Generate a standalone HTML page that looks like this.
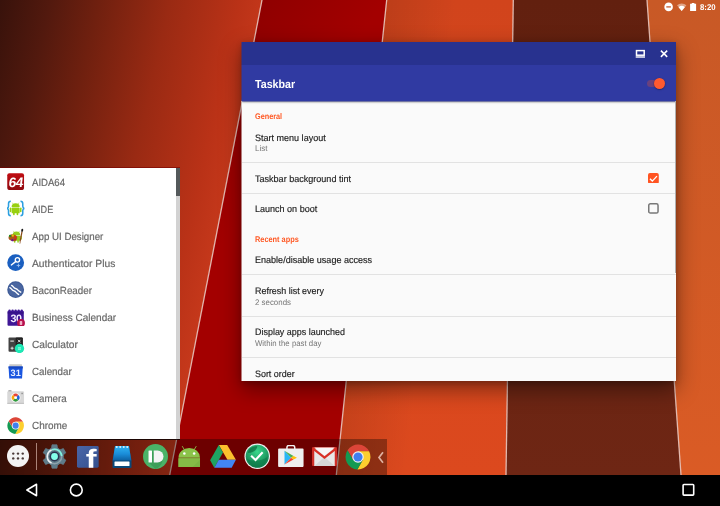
<!DOCTYPE html>
<html>
<head>
<meta charset="utf-8">
<title>Taskbar</title>
<style>
html,body{margin:0;padding:0;}
body{width:720px;height:506px;overflow:hidden;position:relative;background:#000;font-family:"Liberation Sans",sans-serif;text-rendering:geometricPrecision;}
#wall{position:absolute;left:0;top:0;width:720px;height:475px;}
#nav{position:absolute;left:0;top:475px;width:720px;height:31px;background:#000;}
#nav svg{position:absolute;left:0;top:0;}
#taskbar{position:absolute;left:0;top:438.700px;width:387.300px;height:36.300px;background:linear-gradient(90deg,rgba(0,0,0,0.300),rgba(0,0,0,0) 175px),rgba(0,0,0,0.33);}
#tbicons{position:absolute;left:0;top:0;width:720px;height:506px;pointer-events:none;}
#tbicons .div{position:absolute;left:35.800px;top:443px;width:1.200px;height:27px;background:rgba(255,225,215,0.550);}
#tbicons .arr{position:absolute;left:376px;top:449px;width:10px;height:16px;}
#menu{will-change:transform;position:absolute;left:0;top:168px;width:180px;height:270.700px;background:#fff;overflow:hidden;}
#menubot{position:absolute;left:0;top:438.400px;width:180px;height:1.300px;background:rgba(10,0,0,0.800);}
#winedge{position:absolute;left:241px;top:42px;width:1px;height:339px;opacity:0.500;background:linear-gradient(180deg,#28328f 0,#28328f 23px,#303aa2 23px,#303aa2 59.300px,#fafafa 59.300px);}
#menutop{position:absolute;left:0;top:167px;width:180px;height:1px;background:rgba(120,0,0,0.600);}
#menu .row{position:absolute;left:0;width:176px;height:27px;}
#menu .row span{position:absolute;left:31.700px;font-size:10.400px;line-height:13px;color:#686868;-webkit-text-stroke:0.200px #686868;white-space:nowrap;}
#menu .row svg{position:absolute;left:7.300px;top:4.200px;width:17.300px;height:17.300px;}
#menu .track{position:absolute;left:175.700px;top:0;width:4.300px;height:271px;background:#d2d2d2;}
#menu .thumb{position:absolute;left:175.700px;top:0;width:4.300px;height:27.500px;background:#54595b;}
#shadow{position:absolute;left:241.500px;top:42px;width:434.500px;height:339px;box-shadow:0 8px 20px 1px rgba(0,0,0,0.400),0 2px 6px rgba(0,0,0,0.220);}
#win{will-change:transform;position:absolute;left:242px;top:42px;width:434px;height:339.300px;background:#fafafa;overflow:hidden;}
#win .title{position:absolute;left:0;top:0;width:435px;height:23px;background:#28328f;z-index:2;}
#win .barx{position:absolute;left:0;top:59px;width:435px;height:1px;background:rgba(48,58,162,0.450);}
#win .title svg{position:absolute;left:0;top:0;}
#win .bar{position:absolute;left:0;top:23px;width:435px;height:36px;background:#303aa2;box-shadow:0 1.300px 2px rgba(0,0,0,0.500);}
#win .bar h1{position:absolute;left:13.200px;margin:0;font-size:11.600px;line-height:14px;font-weight:bold;color:#fff;white-space:nowrap;}
#win .bar .track{position:absolute;left:404.800px;top:14.900px;width:18px;height:7.600px;border-radius:4px;background:rgba(255,87,34,0.280);}
#win .bar .thumb{position:absolute;left:411.600px;top:12.600px;width:11.800px;height:11.800px;border-radius:6px;background:#ff5a30;box-shadow:0 0.500px 1.500px rgba(0,0,0,0.500);}
#win .hd{position:absolute;left:13.200px;font-size:8.200px;line-height:10px;font-weight:bold;color:#ff5722;white-space:nowrap;}
#win .t{position:absolute;left:13.200px;font-size:9.400px;line-height:11px;color:#202020;-webkit-text-stroke:0.150px #202020;white-space:nowrap;}
#win .s{position:absolute;left:13.200px;font-size:8.200px;line-height:10px;color:#757575;white-space:nowrap;}
#win .d{position:absolute;left:0;width:435px;height:1px;background:#e2e2e2;}
#win .sb{position:absolute;left:432.500px;top:59px;width:1.500px;height:172px;background:#b0b0b0;}
#win .cb1{position:absolute;left:406.100px;top:130.600px;width:10.800px;height:10.800px;}
#win .cb2{position:absolute;left:406.100px;top:160.900px;width:10.800px;height:10.800px;}
#status{will-change:transform;position:absolute;left:0;top:0;width:720px;height:14px;}
#status span{position:absolute;left:699.900px;color:#fff;font-size:8.400px;font-weight:bold;line-height:10px;white-space:nowrap;}
#status svg{position:absolute;left:0;top:0;}
</style>
</head>
<body>
<svg id="wall" width="720" height="475" viewBox="0 0 720 475">
<defs>
<linearGradient id="g1" gradientUnits="userSpaceOnUse" x1="0" y1="0" x2="286.2" y2="62.9"><stop offset="0" stop-color="#38120b"/><stop offset="0.167" stop-color="#52190e"/><stop offset="0.333" stop-color="#70200f"/><stop offset="0.567" stop-color="#9a2a13"/><stop offset="0.8" stop-color="#ba3217"/><stop offset="0.9" stop-color="#c5381b"/><stop offset="1" stop-color="#ca3a1b"/></linearGradient>
<linearGradient id="g2" gradientUnits="userSpaceOnUse" x1="255" y1="0" x2="345" y2="60"><stop offset="0" stop-color="#8e0000"/><stop offset="1" stop-color="#a30000"/></linearGradient>
<linearGradient id="g3" gradientUnits="userSpaceOnUse" x1="0" y1="0" x2="0" y2="475"><stop offset="0" stop-color="#d1441c"/><stop offset="1" stop-color="#dc491e"/></linearGradient>
<linearGradient id="g3b" gradientUnits="userSpaceOnUse" x1="386" y1="0" x2="456" y2="7.4"><stop offset="0" stop-color="#000" stop-opacity="0.1"/><stop offset="1" stop-color="#000" stop-opacity="0"/></linearGradient>
<linearGradient id="g4" gradientUnits="userSpaceOnUse" x1="0" y1="0" x2="0" y2="475"><stop offset="0" stop-color="#62200f"/><stop offset="1" stop-color="#6e2614"/></linearGradient>
<linearGradient id="g5" gradientUnits="userSpaceOnUse" x1="0" y1="0" x2="0" y2="475"><stop offset="0" stop-color="#c85926"/><stop offset="1" stop-color="#da5b25"/></linearGradient>
</defs>
<polygon points="0,0 262,0 169.7,475 0,475" fill="url(#g1)"/>
<polygon points="262,0 386.7,0 336.3,475 169.7,475" fill="url(#g2)"/>
<polygon points="386.7,0 513.3,0 506,475 336.3,475" fill="url(#g3)"/>
<polygon points="386.7,0 513.3,0 506,475 336.3,475" fill="url(#g3b)"/>
<polygon points="513.3,0 647,0 681,475 506,475" fill="url(#g4)"/>
<polygon points="647,0 720,0 720,475 681,475" fill="url(#g5)"/>
<g stroke="#ecc8c0" stroke-width="1.3" fill="none" opacity="0.9">
<line x1="262" y1="0" x2="169.7" y2="475"/>
<line x1="386.7" y1="0" x2="336.3" y2="475"/>
<line x1="513.3" y1="0" x2="506" y2="475"/>
<line x1="647" y1="0" x2="681" y2="475"/>
</g>
</svg>
<div id="status"><svg width="720" height="14" viewBox="0 0 720 14">
<circle cx="668.600" cy="6.900" r="4.300" fill="#fff"/><rect x="666.300" y="6.200" width="4.600" height="1.400" fill="#c86840"/>
<path d="M677,5.300 a6.800,6.800 0 0 1 9.400,0 l-4.700,5.800 z" fill="#fff" opacity="0.450"/>
<path d="M678.600,7.200 a4.500,4.500 0 0 1 6.200,0 l-3.100,3.900 z" fill="#fff"/>
<path d="M691.800,2.900 h2.600 v0.900 h1.700 v7.200 h-6 v-7.200 h1.700 z" fill="#fff"/>
</svg><span style="top:2.00px;transform:scale(0.9305,1.0);transform-origin:0 0px">8:20</span></div>
<div id="shadow"></div><div id="winedge"></div>
<div id="win">
<div class="title"><svg width="434" height="23" viewBox="0 0 434 23"><rect x="394.500" y="8.600" width="7.700" height="4.600" fill="none" stroke="#fff" stroke-width="1.500"/><rect x="393.700" y="14.300" width="9.300" height="1.400" fill="#fff"/><path d="M418.900,8.600 l6.300,6.300 M425.200,8.600 l-6.300,6.300" stroke="#fff" stroke-width="1.500"/></svg></div>
<div class="bar"><h1 style="top:13.00px;transform:scale(0.9218,1.0);transform-origin:0 0px">Taskbar</h1><div class="track"></div><div class="thumb"></div></div>
<div class="barx"></div>
<div class="hd" style="top:69.50px;transform:scale(0.8885,1.0);transform-origin:0 0px">General</div>
<div class="t" style="top:90.00px;transform:translateY(-0.4px) scale(0.9621,1.0);transform-origin:0 0px">Start menu layout</div>
<div class="s" style="top:101.50px;transform:translateY(0.4px) scale(0.9804,1.0);transform-origin:0 0px">List</div>
<div class="d" style="top:119.600px"></div>
<div class="t" style="top:131.00px;transform:translateY(-0.3px) scale(0.9644,1.0);transform-origin:0 0px">Taskbar background tint</div>
<div class="d" style="top:150.700px"></div>
<div class="t" style="top:161.00px;transform:translateY(0.2px) scale(0.9620,1.0);transform-origin:0 0px">Launch on boot</div>
<div class="hd" style="top:192.50px;transform:scale(0.8996,1.0);transform-origin:0 0px">Recent apps</div>
<div class="t" style="top:212.00px;transform:translateY(0.3px) scale(0.9643,1.0);transform-origin:0 0px">Enable/disable usage access</div>
<div class="d" style="top:232.400px"></div>
<div class="t" style="top:243.00px;transform:translateY(-0.3px) scale(0.9514,1.0);transform-origin:0 0px">Refresh list every</div>
<div class="s" style="top:255.50px;transform:translateY(-0.1px) scale(0.9644,1.0);transform-origin:0 0px">2 seconds</div>
<div class="d" style="top:273.600px"></div>
<div class="t" style="top:284.00px;transform:translateY(0.1px) scale(0.9540,1.0);transform-origin:0 0px">Display apps launched</div>
<div class="s" style="top:296.50px;transform:translateY(-0.2px) scale(0.9535,1.0);transform-origin:0 0px">Within the past day</div>
<div class="d" style="top:315.300px"></div>
<div class="t" style="top:326.00px;transform:translateY(-0.3px) scale(0.9499,1.0);transform-origin:0 0px">Sort order</div>
<div class="sb"></div>
<svg class="cb1" viewBox="0 0 20 20"><rect x="0" y="0" width="20" height="20" rx="3.500" fill="#ff5422"/><path d="M3.600,10.600 l4.400,4.400 l8.600,-9.200" fill="none" stroke="#fff" stroke-width="2.500"/></svg>
<svg class="cb2" viewBox="0 0 20 20"><rect x="1.400" y="1.400" width="17.200" height="17.200" rx="3" fill="none" stroke="#787878" stroke-width="2.800"/></svg>
</div>
<div id="menutop"></div><div id="menubot"></div>
<div id="menu">
<div class="track"></div><div class="thumb"></div>
<div class="row" style="top:0.5px"><svg style="top:4.20px" viewBox="0 0 34 34"><defs><linearGradient id="ai" x1="0" y1="0" x2="0" y2="1"><stop offset="0" stop-color="#c00c12"/><stop offset="1" stop-color="#900a10"/></linearGradient></defs>
<rect x="0.5" y="0.5" width="33" height="33" rx="4" fill="url(#ai)"/>
<text x="19.500" y="27.300" font-family="Liberation Sans,sans-serif" font-weight="bold" font-size="27" text-anchor="middle" fill="#fff" letter-spacing="-1.2" transform="skewX(-7)">64</text></svg><span style="top:8.50px;transform:scale(0.9215,1.0);transform-origin:0 0px">AIDA64</span></div>
<div class="row" style="top:28.0px"><svg style="top:4.25px" viewBox="0 0 34 34">
<g transform="translate(17,17.2) scale(1.13)" fill="#98d010">
<path d="M-7,-3 a7,6.5 0 0 1 14,0 z"/>
<rect x="-7" y="-2" width="14" height="10" rx="1.5"/>
<rect x="-10.2" y="-2" width="2.6" height="8" rx="1.3"/>
<rect x="7.6" y="-2" width="2.6" height="8" rx="1.3"/>
<rect x="-4.5" y="6" width="2.8" height="5.5" rx="1.3"/>
<rect x="1.7" y="6" width="2.8" height="5.5" rx="1.3"/>
<path d="M-4.2,-8 l-1.6,-2.6 M4.2,-8 l1.6,-2.6" stroke="#98d010" stroke-width="0.9" fill="none"/>
</g>
<path d="M7.5,2.5 c-4,0 -4.5,2 -4.5,5 v5 c0,2.5 -1,3.5 -3,4 c2,0.5 3,1.500 3,4 v5.5 c0,3 0.5,5 4.500,5" fill="none" stroke="#2b9fe0" stroke-width="3"/>
<path d="M26.500,2.5 c4,0 4.500,2 4.500,5 v5 c0,2.5 1,3.500 3,4 c-2,0.500 -3,1.500 -3,4 v5.500 c0,3 -0.500,5 -4.500,5" fill="none" stroke="#2b9fe0" stroke-width="3"/>
</svg><span style="top:8.02px;transform:scale(0.8778,1.0);transform-origin:0 0px">AIDE</span></div>
<div class="row" style="top:55.0px"><svg style="top:4.30px" viewBox="0 0 34 34">
<g transform="translate(18.5,18.8) scale(1.05)" fill="#96cc1e">
<path d="M-7,-3 a7,6.5 0 0 1 14,0 z"/>
<rect x="-7" y="-2" width="14" height="10" rx="1.5"/>
<rect x="-10.2" y="-2" width="2.6" height="8" rx="1.3"/>
<rect x="7.6" y="-2" width="2.6" height="8" rx="1.3"/>
<rect x="-4.5" y="6" width="2.8" height="5.5" rx="1.3"/>
<rect x="1.7" y="6" width="2.8" height="5.5" rx="1.3"/>
<path d="M-4.2,-8 l-1.6,-2.6 M4.2,-8 l1.6,-2.6" stroke="#96cc1e" stroke-width="0.9" fill="none"/>
</g>
<ellipse cx="11.500" cy="21" rx="8.600" ry="6.600" fill="#a85a1c" transform="rotate(12 11.5 21)"/>
<circle cx="6" cy="17.500" r="2.200" fill="#1e8c1e"/>
<circle cx="11.500" cy="17" r="2.100" fill="#e8c800"/>
<circle cx="16.500" cy="19.500" r="2.100" fill="#e03010"/>
<circle cx="16" cy="24.500" r="2.100" fill="#d01828"/>
<circle cx="10.500" cy="26" r="2.200" fill="#6010a0"/>
<path d="M29.500,9 L25,32" stroke="#8a4a1a" stroke-width="2.400"/>
<path d="M25.200,28 L24.700,32.500" stroke="#e8d8d0" stroke-width="2.400"/>
<ellipse cx="29.900" cy="6.500" rx="1.900" ry="3.200" fill="#181818" transform="rotate(12 29.9 6.5)"/>
</svg><span style="top:7.99px;transform:scale(0.9351,1.0);transform-origin:0 0px">App UI Designer</span></div>
<div class="row" style="top:82.0px"><svg style="top:4.35px" viewBox="0 0 34 34">
<circle cx="17" cy="17" r="16.500" fill="#1a5fc0"/>
<circle cx="20.500" cy="11.500" r="4.300" fill="none" stroke="#fff" stroke-width="2.6"/>
<path d="M17.500,14.500 L8.500,21.500" stroke="#fff" stroke-width="2.8" stroke-linecap="round"/>
<path d="M22.500,19 v7 M19,22.500 h7" stroke="#9cc0f0" stroke-width="1.8"/>
</svg><span style="top:7.96px;transform:scale(0.9878,1.0);transform-origin:0 0px">Authenticator Plus</span></div>
<div class="row" style="top:109.1px"><svg style="top:4.40px" viewBox="0 0 34 34">
<circle cx="17" cy="17" r="16.500" fill="#3d5a96"/>
<circle cx="17" cy="17" r="14.300" fill="#4a66a0"/>
<path d="M9,8.500 c3,1 3,4 6,5.500 c3,1.500 4,1 6,3.500 c2,2.500 3,3 6,4.500" fill="none" stroke="#fff" stroke-width="2.600" stroke-linecap="round"/>
<path d="M5.500,13 c3,1 3,4 6,5.500 c3,1.500 4,1 6,3.500 c2,2.500 3,3 5.500,4.500" fill="none" stroke="#fff" stroke-width="2.600" stroke-linecap="round"/>
</svg><span style="top:7.93px;transform:scale(0.9442,1.0);transform-origin:0 0px">BaconReader</span></div>
<div class="row" style="top:136.1px"><svg style="top:4.45px" viewBox="0 0 34 34">
<rect x="1" y="3.500" width="32" height="29.500" rx="2" fill="#3f1796"/>
<g fill="#3f1796"><circle cx="5" cy="3.300" r="2.300"/><circle cx="11" cy="3.300" r="2.300"/><circle cx="17" cy="3.300" r="2.300"/><circle cx="23" cy="3.300" r="2.300"/><circle cx="29" cy="3.300" r="2.300"/></g>
<rect x="1" y="6" width="32" height="3" fill="#2e0f7a" opacity="0.500"/>
<text x="17.800" y="25.500" font-family="Liberation Sans,sans-serif" font-weight="bold" font-size="21" text-anchor="middle" fill="#f4f0ff" letter-spacing="-0.6">30</text>
<circle cx="27.500" cy="27.500" r="7.800" fill="#b8104c"/>
<rect x="25" y="23.500" width="5" height="8" rx="1.500" fill="#f0b0c8"/>
</svg><span style="top:7.90px;transform:scale(0.9654,1.0);transform-origin:0 0px">Business Calendar</span></div>
<div class="row" style="top:163.1px"><svg style="top:4.50px" viewBox="0 0 34 34">
<rect x="3" y="3" width="28" height="28" rx="2" fill="#424242"/>
<rect x="17" y="3" width="14" height="28" rx="2" fill="#212121"/>
<rect x="6.500" y="9" width="7" height="2" fill="#eee"/>
<path d="M21.500,7.500 l5,5 M26.500,7.500 l-5,5" stroke="#eee" stroke-width="1.800"/>
<path d="M7,24 h6 M10,21 v6" stroke="#eee" stroke-width="1.800"/>
<circle cx="24.500" cy="24.500" r="9.200" fill="#1de9b6"/>
<path d="M21.500,23.300 h6 M21.500,26 h6" stroke="#c8fff0" stroke-width="1.500"/>
</svg><span style="top:7.87px;transform:scale(0.9790,1.0);transform-origin:0 0px">Calculator</span></div>
<div class="row" style="top:190.2px"><svg style="top:4.55px" viewBox="0 0 34 34">
<rect x="4.500" y="2.500" width="25" height="6" rx="1" fill="#c8c8c8"/>
<path d="M3,7 h28 l-1.500,23.500 h-25 z" fill="#1a56e0"/>
<path d="M3,7 h28 l-0.300,4 h-27.400 z" fill="#1546c0"/>
<text x="17" y="26.500" font-family="Liberation Sans,sans-serif" font-weight="bold" font-size="18" text-anchor="middle" fill="#e8f0ff">31</text>
</svg><span style="top:7.84px;transform:scale(0.9414,1.0);transform-origin:0 0px">Calendar</span></div>
<div class="row" style="top:217.2px"><svg style="top:4.60px" viewBox="0 0 34 34">
<g transform="translate(0,-2.600)">
<rect x="2.500" y="3" width="6.500" height="4" rx="1.200" fill="#9a9a9a"/>
<rect x="0.500" y="5.300" width="33" height="24.600" rx="2.200" fill="#d8d8d8"/>
<rect x="0.500" y="27.700" width="33" height="2.200" rx="1" fill="#c4c4c4"/>
<rect x="28.300" y="8" width="2.800" height="2.800" fill="#8e8e8e"/>
<circle cx="17" cy="17.600" r="9.600" fill="#f4f4f4"/>
<g transform="rotate(-45 17 17.600)">
<path d="M17,10.100 a7.500,7.500 0 0 1 7.500,7.500 h-7.500 z" fill="#ea4335"/>
<path d="M24.500,17.600 a7.500,7.500 0 0 1 -7.500,7.500 v-7.500 z" fill="#1e62d8"/>
<path d="M17,25.100 a7.500,7.500 0 0 1 -7.500,-7.500 h7.500 z" fill="#2e9c3c"/>
<path d="M9.500,17.600 a7.500,7.500 0 0 1 7.500,-7.500 v7.500 z" fill="#f9a60a"/>
</g>
<circle cx="17" cy="17.600" r="2.900" fill="#fff"/>
</g>
</svg><span style="top:7.81px;transform:scale(0.9386,1.0);transform-origin:0 0px">Camera</span></div>
<div class="row" style="top:244.2px"><svg style="top:4.65px" viewBox="0 0 48 48">
<path d="M4.680,11.530 A23,23 0 0 1 44.460,13.500 L24,13.500 L24,24 L14.910,29.250 Z" fill="#dc4538"/>
<path d="M44.460,13.500 A23,23 0 0 1 22.860,46.970 L33.090,29.250 L24,24 L24,13.500 Z" fill="#fdcf2e"/>
<path d="M22.860,46.970 A23,23 0 0 1 4.680,11.530 L14.910,29.250 L24,24 L33.090,29.250 Z" fill="#139a52"/>
<circle cx="24" cy="24" r="10.600" fill="#f2f2f2"/>
<circle cx="24" cy="24" r="8.400" fill="#3f7fee"/>
</svg><span style="top:7.78px;transform:scale(0.9549,1.0);transform-origin:0 0px">Chrome</span></div>
</div>
<div id="taskbar"></div>
<div id="tbicons">
<div class="div"></div>
<svg style="position:absolute;left:7.10px;top:445.10px;width:22px;height:22px" viewBox="0 0 44 44">
<circle cx="22" cy="22" r="22" fill="#f4f4f4"/>
<g fill="#4a3a38"><circle cx="12.500" cy="17.200" r="2.400"/><circle cx="22" cy="17.200" r="2.400"/><circle cx="31.500" cy="17.200" r="2.400"/><circle cx="12.500" cy="26.800" r="2.400"/><circle cx="22" cy="26.800" r="2.400"/><circle cx="31.500" cy="26.800" r="2.400"/></g>
</svg>
<svg style="position:absolute;left:41.90px;top:443.80px;width:25px;height:25px" viewBox="0 0 50 50">
<path d="M19.07,8.53 L20.05,1.72 L29.95,1.72 L30.93,8.53 L36.30,11.63 L42.69,9.07 L47.64,17.65 L42.22,21.90 L42.22,28.10 L47.64,32.35 L42.69,40.93 L36.30,38.37 L30.93,41.47 L29.95,48.28 L20.05,48.28 L19.07,41.47 L13.70,38.37 L7.31,40.93 L2.36,32.35 L7.78,28.10 L7.78,21.90 L2.36,17.65 L7.31,9.07 L13.70,11.63 Z" fill="#5f7c8a" stroke="#5f7c8a" stroke-width="1.600" stroke-linejoin="round"/>
<circle cx="25" cy="25" r="18.200" fill="#5f7c8a"/>
<circle cx="25" cy="25" r="14.400" fill="none" stroke="#8fa3ad" stroke-width="2.900"/>
<path d="M20,11.500 A14.400,14.400 0 0 1 39.400,24" fill="none" stroke="#7ff5e0" stroke-width="3.200"/>
<path d="M19,11.900 A14.400,14.400 0 0 0 19,38.100" fill="none" stroke="#eceff1" stroke-width="3.200"/>
<circle cx="25" cy="25" r="10" fill="#2a3450"/>
<circle cx="25" cy="25" r="6.800" fill="#84ffea"/>
</svg>
<svg style="position:absolute;left:77.45px;top:445.85px;width:21.7px;height:21.7px" viewBox="0 0 44 44">
<defs><linearGradient id="fbg" x1="0" y1="0" x2="1" y2="1"><stop offset="0" stop-color="#4a66a8"/><stop offset="1" stop-color="#34508e"/></linearGradient><clipPath id="fbc"><rect x="0" y="0" width="44" height="44" rx="3"/></clipPath></defs>
<rect x="0" y="0" width="44" height="44" rx="3" fill="url(#fbg)"/>
<g clip-path="url(#fbc)"><text x="0" y="0" transform="translate(28.500,44.500) scale(1.220,1)" font-family="Liberation Sans,sans-serif" font-weight="bold" font-size="54" text-anchor="middle" fill="#fff">f</text></g>
</svg>
<svg style="position:absolute;left:112.10px;top:445.10px;width:20px;height:23.2px" viewBox="0 0 40 46"><defs><linearGradient id="nt" x1="0" y1="0" x2="0" y2="1"><stop offset="0" stop-color="#30b4f4"/><stop offset="0.55" stop-color="#1a8cd8"/><stop offset="1" stop-color="#0d5fa0"/></linearGradient></defs>
<path d="M6,3 h28 l5,28 v13 a2,2 0 0 1 -2,2 h-34 a2,2 0 0 1 -2,-2 v-13 z" fill="#0a4878"/>
<path d="M6,2 h28 l4.500,29 h-37 z" fill="url(#nt)"/>
<rect x="5" y="33" width="30" height="9" rx="1" fill="#fff"/>
<g fill="#d8f0ff"><circle cx="9.500" cy="4" r="2"/><circle cx="16.500" cy="4" r="2"/><circle cx="23.500" cy="4" r="2"/><circle cx="30.500" cy="4" r="2"/></g>
</svg>
<svg style="position:absolute;left:143.20px;top:444.00px;width:25px;height:25px" viewBox="0 0 50 50">
<circle cx="25" cy="25" r="25" fill="#4ab367"/>
<path d="M11,13 h6 l22,22 a25,25 0 0 1 -14,15 l-14,-13 z" fill="#3a9a55" opacity="0.800"/>
<rect x="11" y="13" width="7" height="24" rx="1" fill="#fff"/>
<path d="M21.500,13 h7.500 a12,12 0 0 1 0,24 h-7.500 z" fill="#f4f4f4"/>
</svg>
<svg style="position:absolute;left:178.35px;top:444.95px;width:22.5px;height:22.5px" viewBox="0 0 46 46">
<path d="M9,3 l4.500,7.500 M37,3 l-4.500,7.500" stroke="#8bc34a" stroke-width="1.800" stroke-linecap="round"/>
<path d="M1,26 a22,20 0 0 1 44,0 z" fill="#8bc34a"/>
<path d="M1,27 h44 v17 a2,2 0 0 1 -2,2 h-40 a2,2 0 0 1 -2,-2 z" fill="#7cb342"/>
<path d="M1,27 h44 v3 l-16,16 h-26 a2,2 0 0 1 -2,-2 z" fill="#85bb46"/>
<circle cx="13" cy="17.500" r="2.600" fill="#fff"/><circle cx="33" cy="17.500" r="2.600" fill="#fff"/>
</svg>
<svg style="position:absolute;left:210.30px;top:445.00px;width:26px;height:22.8px" viewBox="0 0 52 46">
<path d="M17.500,0 h17 l17.500,30 h-17 z" fill="#fbc02d"/>
<path d="M17.500,0 l8.500,15 l-17.500,31 l-8.500,-15 z" fill="#1ea362"/>
<path d="M17.500,30 h34.500 l-8.500,16 h-35 z" fill="#4285f4"/>
</svg>
<svg style="position:absolute;left:243.75px;top:443.15px;width:26.5px;height:26.5px" viewBox="0 0 54 54"><defs><radialGradient id="ck" cx="0.5" cy="0.300" r="0.800"><stop offset="0" stop-color="#3ad88c"/><stop offset="1" stop-color="#0a6e42"/></radialGradient></defs>
<circle cx="27" cy="27" r="26" fill="#f2f2f2"/>
<circle cx="27" cy="27" r="23.600" fill="url(#ck)"/>
<path d="M8,20 a20,14 0 0 1 19,-14 c0,8 -9,14 -19,14 z" fill="#0b6b3f" opacity="0.700"/>
<path d="M6,32 c10,6 30,6 42,-4 a23,23 0 0 1 -21,22 a23,23 0 0 1 -21,-18 z" fill="#0c7a48" opacity="0.600"/>
<path d="M14.500,26 l9,8.500 l14.500,-15.500" fill="none" stroke="#fff" stroke-width="4.300"/>
</svg>
<svg style="position:absolute;left:277.95px;top:444.55px;width:25.7px;height:22.5px" viewBox="0 0 52 46">
<path d="M18,8 v-3 a4,4 0 0 1 4,-4 h8 a4,4 0 0 1 4,4 v3" fill="none" stroke="#f2f2f2" stroke-width="3"/>
<path d="M0,9 a2,2 0 0 1 2,-2 h48 a2,2 0 0 1 2,2 v33 a4,4 0 0 1 -4,4 h-44 a4,4 0 0 1 -4,-4 z" fill="#efefef"/>
<path d="M13,12 l13.500,14 l-13.500,14 z" fill="#29b6f6"/>
<path d="M13,12 l18.500,10.300 l-5,3.700 z" fill="#4caf50"/>
<path d="M13,40 l18.500,-10.300 l-5,-3.700 z" fill="#f44336"/>
<path d="M31.500,22.300 l7,3.700 l-7,3.700 l-5,-3.700 z" fill="#ffc107"/>
</svg>
<svg style="position:absolute;left:312.00px;top:447.00px;width:25px;height:19.2px" viewBox="0 0 50 38">
<rect x="0" y="0" width="50" height="38" rx="2.500" fill="#cf2e27"/>
<path d="M4.500,3 h41 v35 h-41 z" fill="#e8e8e8"/>
<path d="M4.500,38 l20.500,-18 l20.500,18 z" fill="#d6d6d6"/>
<path d="M4.500,1 h41 l-20.500,16.500 z" fill="#f6f6f6"/>
<path d="M1.500,2.500 l23.500,18.500 l23.500,-18.500" fill="none" stroke="#d93025" stroke-width="4.600" stroke-linejoin="miter"/>
</svg>
<svg style="position:absolute;left:345.30px;top:443.60px;width:26px;height:26px" viewBox="0 0 48 48">
<path d="M4.680,11.530 A23,23 0 0 1 44.460,13.500 L24,13.500 L24,24 L14.910,29.250 Z" fill="#dc4538"/>
<path d="M44.460,13.500 A23,23 0 0 1 22.860,46.970 L33.090,29.250 L24,24 L24,13.500 Z" fill="#fdcf2e"/>
<path d="M22.860,46.970 A23,23 0 0 1 4.680,11.530 L14.910,29.250 L24,24 L33.090,29.250 Z" fill="#139a52"/>
<circle cx="24" cy="24" r="10.600" fill="#f2f2f2"/>
<circle cx="24" cy="24" r="8.400" fill="#3f7fee"/>
</svg>
<svg class="arr" viewBox="0 0 10 16"><path d="M7,3.300 L3,8.500 L7,13.700" fill="none" stroke="#e8c0b0" stroke-width="1.700" opacity="0.900"/></svg>
</div>
<div id="nav"><svg width="720" height="31" viewBox="0 0 720 31">
<path d="M36.500,9.300 L26.900,15 L36.500,20.700 Z" fill="none" stroke="#fff" stroke-width="1.600" stroke-linejoin="round"/>
<circle cx="76.300" cy="15" r="5.900" fill="none" stroke="#fff" stroke-width="1.600"/>
<rect x="683.100" y="9.500" width="10.600" height="10.600" rx="0.800" fill="none" stroke="#fff" stroke-width="1.600"/>
</svg></div>
</body>
</html>
